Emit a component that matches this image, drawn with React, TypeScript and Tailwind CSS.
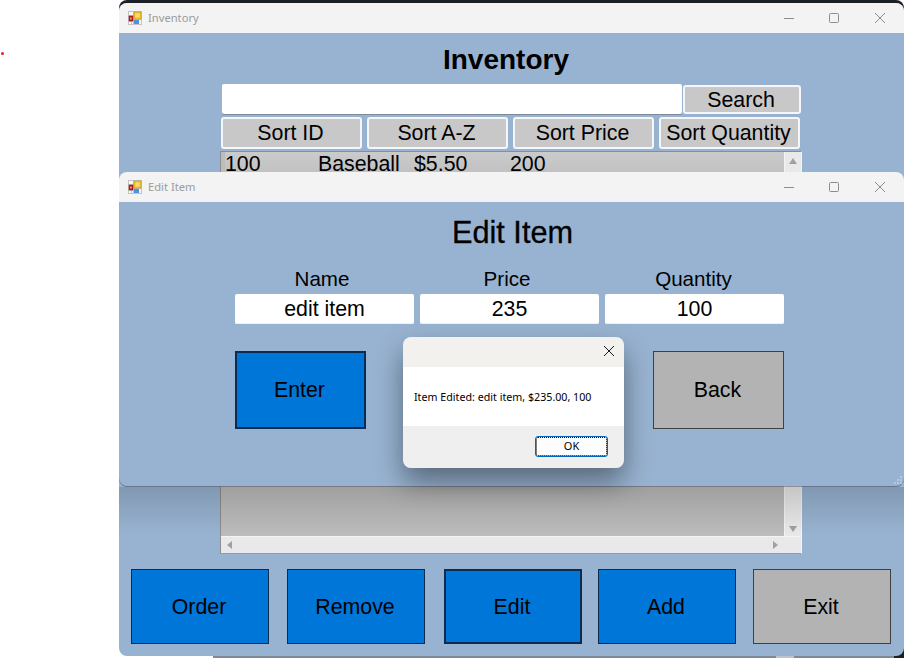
import React from "react";

const ARIAL = "font-['Liberation_Sans',Arial,sans-serif]";

function AppIcon() {
  return (
    <svg width="14" height="14" viewBox="0 0 14 14" className="shrink-0">
      <rect x="0" y="0" width="14" height="14" fill="#c4c4c4" />
      <path d="M1 1h4v3H1zM1 11h2v2H1zM4 11h1v2H4z" fill="#f8f8f8" />
      <rect x="1" y="5" width="4" height="5" fill="#c41616" stroke="#8a1c1c" strokeWidth="0.5" />
      <rect x="2.2" y="6.5" width="1.4" height="2" fill="#f2b8a8" />
      <rect x="6" y="1" width="7" height="7" fill="#f9c62e" stroke="#b08c20" strokeWidth="0.6" />
      <rect x="7.5" y="2.5" width="4" height="4" fill="#fbdc6a" />
      <rect x="6" y="9" width="5" height="4" fill="#4f8fe4" />
      <rect x="11" y="9" width="2" height="4" fill="#f4f4f4" />
    </svg>
  );
}

function WinControls() {
  return (
    <div className="ml-auto flex items-center">
      <svg width="12" height="12" viewBox="0 0 12 12" className="mr-[33px]">
        <path d="M1 6.5H11" stroke="#8c8c8c" strokeWidth="1" />
      </svg>
      <svg width="12" height="12" viewBox="0 0 12 12" className="mr-[34px]">
        <rect x="1.5" y="1.5" width="9" height="9" rx="1" fill="none" stroke="#8c8c8c" strokeWidth="1" />
      </svg>
      <svg width="12" height="12" viewBox="0 0 12 12" className="mr-[18px]">
        <path d="M1 1L11 11M11 1L1 11" stroke="#8c8c8c" strokeWidth="1" />
      </svg>
    </div>
  );
}

function TitleBar({ title }: { title: string }) {
  return (
    <div className="flex h-[30px] shrink-0 items-center rounded-t-[8px] bg-[#f3f3f3] pl-[9px]">
      <AppIcon />
      <span className="ml-[6px] font-['Noto_Sans',sans-serif] text-[11.2px] text-[#9b9b9b]">{title}</span>
      <WinControls />
    </div>
  );
}

function SortBtn({ label, w }: { label: string; w: string }) {
  return (
    <button className={`flex h-[32px] items-center justify-center rounded-[3px] border-2 border-[#f4f6f8] bg-[#c8c8c8] pr-[2px] pt-[1px] text-[21.33px] text-black ${w}`}>
      {label}
    </button>
  );
}

function BigBtn({ label, tone, strong, w }: { label: string; tone: "blue" | "gray"; strong?: boolean; w: string }) {
  const color = tone === "blue" ? "bg-[#0176d9]" : "bg-[#b3b3b3]";
  const border =
    tone === "blue"
      ? strong
        ? "border-2 border-[#0c2b50]"
        : "border border-[#0c2b50]"
      : "border border-[#404040]";
  return <button className={`flex items-center justify-center pr-[2px] pt-[2px] text-[21.33px] text-black ${color} ${border} ${w}`}>{label}</button>;
}

function Arrow({ d }: { d: string }) {
  return (
    <svg width="8" height="8" viewBox="0 0 8 8">
      <path d={d} fill="#a0a0a0" />
    </svg>
  );
}

function InventoryWindow() {
  return (
    <div className="absolute left-[119px] top-[3px] flex h-[653px] w-[785px] flex-col rounded-[8px] bg-[#98b3d1]">
      <TitleBar title="Inventory" />
      <div className="flex flex-1 flex-col">
        <h1 className="mt-[9px] h-[35px] pr-[11px] text-center text-[28px] font-bold leading-[36px] text-black">Inventory</h1>
        <div className="ml-[102px] mt-[7px] flex w-[582px] flex-col">
          <div className="flex h-[31px] gap-[1px]">
            <div className="ml-[1px] h-[30px] w-[460px] rounded-[2px] bg-white shadow-[0_1px_0_#7f8a97]" />
            <button className="mt-[1px] h-[29px] w-[118px] rounded-[3px] border-2 border-[#f4f6f8] bg-[#c8c8c8] pr-[2px] text-[21.33px] leading-[24px] text-black">Search</button>
          </div>
          <div className="mt-[2px] flex gap-[5px]">
            <SortBtn label="Sort ID" w="w-[141px]" />
            <SortBtn label="Sort A-Z" w="w-[141px]" />
            <SortBtn label="Sort Price" w="w-[141px]" />
            <SortBtn label="Sort Quantity" w="w-[141px]" />
          </div>
          <div className="-ml-[1px] mt-[2px] flex h-[403px] w-[582px] flex-col border border-t-[#8d8d8d] border-l-[#8d8d8d] border-r-[#f4f4f4] border-b-[#9a9a9a] bg-[#bcbcbc]">
            <div className="flex min-h-0 flex-1">
              <div className="flex-1 pl-[4px] text-[21.33px] leading-[25px] text-black">
                <div className="flex h-[25px] bg-linear-to-b from-[#cbcbcb] to-[#bfbfbf]">
                  <span className="w-[93px]">100</span>
                  <span className="w-[96px]">Baseball</span>
                  <span className="w-[96px]">$5.50</span>
                  <span>200</span>
                </div>
              </div>
              <div className="flex w-[17px] flex-col items-center justify-between border-l border-[#f4f4f4] bg-[#e9e9e9] pb-[3px] pt-[5px]">
                <Arrow d="M4 1L8 7H0Z" />
                <Arrow d="M0 1H8L4 7Z" />
              </div>
            </div>
            <div className="flex h-[17px] items-center justify-between border-t border-[#f4f4f4] bg-[#e9e9e9] pl-[5px] pr-[22px]">
              <Arrow d="M6 0V8L1 4Z" />
              <Arrow d="M2 0V8L7 4Z" />
            </div>
          </div>
        </div>
        <div className="ml-[12px] mt-[15px] flex h-[75px] gap-[18px]">
          <BigBtn label="Order" tone="blue" w="w-[138px]" />
          <BigBtn label="Remove" tone="blue" w="w-[138px]" />
          <BigBtn label="Edit" tone="blue" strong w="w-[138px] ml-[1px]" />
          <BigBtn label="Add" tone="blue" w="w-[138px] -ml-[2px]" />
          <BigBtn label="Exit" tone="gray" w="w-[138px] -ml-[1px]" />
        </div>
      </div>
    </div>
  );
}

function EditWindow() {
  const fields = [
    { label: "Name", value: "edit item", lx: "pr-[5px]" },
    { label: "Price", value: "235", lx: "pr-[5px]" },
    { label: "Quantity", value: "100", lx: "pr-[2px]" },
  ];
  return (
    <div className="absolute left-[119px] top-[172px] flex h-[314px] w-[785px] flex-col rounded-[8px] bg-[#98b3d1] shadow-[0_1px_0_rgba(60,70,85,0.55)]">
      <TitleBar title="Edit Item" />
      <div className="relative flex flex-1 flex-col">
        <h2 className="mt-[13px] h-[35px] pl-[2px] text-center text-[30.7px] leading-[36px] text-black [-webkit-text-stroke:0.3px_black]">
          Edit Item
        </h2>
        <div className="ml-[116px] mt-[17px] flex gap-[6px]">
          {fields.map((f) => (
            <div key={f.label} className="flex w-[179px] flex-col">
              <span className={`h-[24px] text-center text-[20.6px] leading-[24px] text-black ${f.lx}`}>{f.label}</span>
              <div className="mt-[3px] flex h-[30px] items-center justify-center rounded-[2px] bg-white pt-[2px] text-[21.33px] text-black shadow-[inset_0_-1px_0_#eef1f5]">{f.value}</div>
            </div>
          ))}
        </div>
        <div className="ml-[116px] mt-[27px] flex h-[78px] w-[549px] justify-between">
          <BigBtn label="Enter" tone="blue" strong w="w-[131px]" />
          <BigBtn label="Back" tone="gray" w="w-[131px]" />
        </div>
        <svg width="10" height="10" viewBox="0 0 10 10" className="absolute bottom-[1px] right-[1px]">
          <path d="M7 1h2v2H7zM4 4h2v2H4zM7 4h2v2H7zM1 7h2v2H1zM4 7h2v2H4zM7 7h2v2H7z" fill="#b7c8dd" />
        </svg>
      </div>
    </div>
  );
}

function Dialog() {
  return (
    <div className="absolute left-[403px] top-[337px] flex h-[131px] w-[221px] flex-col overflow-hidden rounded-[8px] font-['Noto_Sans',sans-serif] shadow-[0_14px_28px_rgba(0,0,0,0.42)]">
      <div className="flex h-[30px] shrink-0 items-center justify-end bg-[#f3f1ee] pb-[2px] pr-[9px]">
        <svg width="12" height="12" viewBox="0 0 12 12">
          <path d="M1 1L11 11M11 1L1 11" stroke="#1a1a1a" strokeWidth="1" />
        </svg>
      </div>
      <div className="flex h-[59px] shrink-0 items-center bg-white pl-[11px] pt-[2px] text-[10.7px] text-black">
        Item Edited: edit item, $235.00, 100
      </div>
      <div className="flex flex-1 items-start justify-end bg-[#efefef] pr-[16px] pt-[10px]">
        <button className="flex h-[21px] w-[73px] items-center justify-center rounded-[3px] border border-[#0067c0] bg-[#fdfdfd] text-[11px] text-black outline-1 -outline-offset-2 outline-dotted outline-black">
          OK
        </button>
      </div>
    </div>
  );
}

export default function App() {
  return (
    <div className={`relative h-[658px] w-[904px] overflow-hidden bg-white ${ARIAL}`}>
      <div className="absolute left-[1px] top-[52px] h-[3px] w-[3px] rounded-full bg-[#e0202c]" />
      <div className="absolute left-[119px] top-0 h-[12px] w-[785px] rounded-t-[8px] bg-[#1b1f26]" />
      <div className="absolute bottom-0 left-[213px] h-[2px] w-[691px] bg-[#7f8998]" />
      <div className="absolute bottom-0 left-[776px] h-[2px] w-[18px] bg-[#bfc3c9]" />
      <div className="absolute bottom-0 right-0 h-[10px] w-[10px] bg-[#1b1f26]" />
      <InventoryWindow />
      <div className="absolute left-[119px] top-[487px] h-[48px] w-[785px] bg-linear-to-b from-black/15 to-black/0" />
      <EditWindow />
      <Dialog />
    </div>
  );
}
